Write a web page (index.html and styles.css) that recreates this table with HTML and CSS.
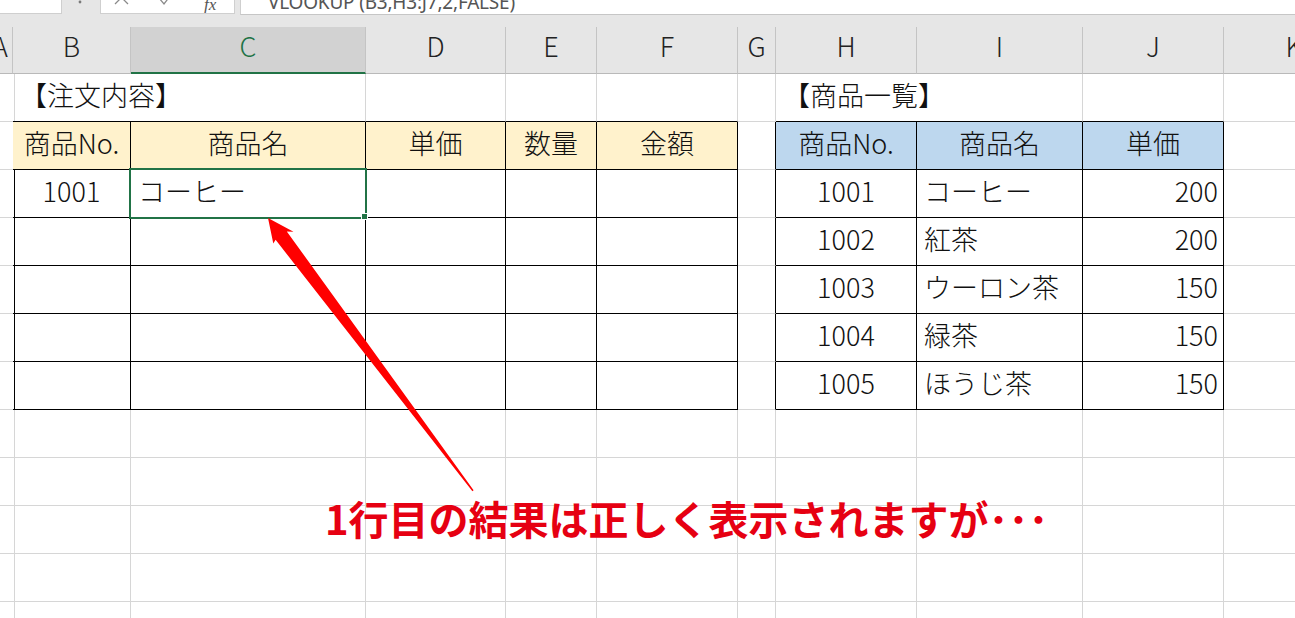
FILE: index.html
```html
<!DOCTYPE html>
<html lang="ja">
<head>
<meta charset="utf-8">
<title>VLOOKUP</title>
<link rel="stylesheet" href="styles.css">
</head>
<body>
<div class="topbar">
  <div class="namebox"></div>
  <div class="dots"><svg width="38" height="14"><circle cx="18" cy="2" r="1.4" fill="#7a7a7a"/></svg></div>
  <div class="fbtns">
    <svg width="135" height="14">
      <path d="M14 -9 L27 4 M27 -9 L14 4" stroke="#8a8a8a" stroke-width="1.3" fill="none"/>
      <path d="M58 -2 L63 4 L72 -8" stroke="#8a8a8a" stroke-width="1.3" fill="none"/>
      <text x="103" y="10" class="fxt">fx</text>
    </svg>
  </div>
  <div class="gap"></div>
  <div class="finput"><div class="ftext">VLOOKUP (B3,H3:J7,2,FALSE)</div></div>
</div>

<div class="sheet">
  <div class="hd a">A</div><div class="hd">B</div><div class="hd sel">C</div><div class="hd">D</div><div class="hd">E</div><div class="hd">F</div><div class="hd">G</div><div class="hd">H</div><div class="hd">I</div><div class="hd">J</div><div class="hd">K</div>

  <div class="c"></div><div class="c s2 bb title">【注文内容】</div><div class="c bb"></div><div class="c bb"></div><div class="c bb"></div><div class="c"></div><div class="c s2 bb title">【商品一覧】</div><div class="c bb"></div><div class="c"></div>

  <div class="c br"></div><div class="c t o ctr">商品No.</div><div class="c t o ctr">商品名</div><div class="c t o ctr">単価</div><div class="c t o ctr">数量</div><div class="c t o ctr">金額</div><div class="c br"></div><div class="c t b ctr">商品No.</div><div class="c t b ctr">商品名</div><div class="c t b ctr">単価</div><div class="c"></div>

  <div class="c br"></div><div class="c t ctr">1001</div><div class="c t sel">コーヒー</div><div class="c t"></div><div class="c t"></div><div class="c t"></div><div class="c br"></div><div class="c t ctr">1001</div><div class="c t">コーヒー</div><div class="c t rgt">200</div><div class="c"></div>

  <div class="c br"></div><div class="c t"></div><div class="c t"></div><div class="c t"></div><div class="c t"></div><div class="c t"></div><div class="c br"></div><div class="c t ctr">1002</div><div class="c t">紅茶</div><div class="c t rgt">200</div><div class="c"></div>

  <div class="c br"></div><div class="c t"></div><div class="c t"></div><div class="c t"></div><div class="c t"></div><div class="c t"></div><div class="c br"></div><div class="c t ctr">1003</div><div class="c t">ウーロン茶</div><div class="c t rgt">150</div><div class="c"></div>

  <div class="c br"></div><div class="c t"></div><div class="c t"></div><div class="c t"></div><div class="c t"></div><div class="c t"></div><div class="c br"></div><div class="c t ctr">1004</div><div class="c t">緑茶</div><div class="c t rgt">150</div><div class="c"></div>

  <div class="c br"></div><div class="c t"></div><div class="c t"></div><div class="c t"></div><div class="c t"></div><div class="c t"></div><div class="c br"></div><div class="c t ctr">1005</div><div class="c t">ほうじ茶</div><div class="c t rgt">150</div><div class="c"></div>

  <div class="c"></div><div class="c"></div><div class="c"></div><div class="c"></div><div class="c"></div><div class="c"></div><div class="c"></div><div class="c"></div><div class="c"></div><div class="c"></div><div class="c"></div>
  <div class="c"></div><div class="c"></div><div class="c"></div><div class="c"></div><div class="c"></div><div class="c"></div><div class="c"></div><div class="c"></div><div class="c"></div><div class="c"></div><div class="c"></div>
  <div class="c"></div><div class="c"></div><div class="c"></div><div class="c"></div><div class="c"></div><div class="c"></div><div class="c"></div><div class="c"></div><div class="c"></div><div class="c"></div><div class="c"></div>
  <div class="c"></div><div class="c"></div><div class="c"></div><div class="c"></div><div class="c"></div><div class="c"></div><div class="c"></div><div class="c"></div><div class="c"></div><div class="c"></div><div class="c"></div>
  <div class="c"></div><div class="c"></div><div class="c"></div><div class="c"></div><div class="c"></div><div class="c"></div><div class="c"></div><div class="c"></div><div class="c"></div><div class="c"></div><div class="c"></div>
</div>

<svg class="arrow" width="1295" height="618" viewBox="0 0 1295 618">
  <polygon points="268,218 293.5,231.7 286.8,231.4 473.6,490.3 472.4,491.3 275.6,239.8 273.3,243.5" fill="#ff0000"/>
</svg>
<div class="note">1行目の結果は正しく表示されますが･･･</div>
</body>
</html>
```

FILE: styles.css
```css
html, body {
  margin: 0;
  padding: 0;
}

body {
  width: 1295px;
  height: 618px;
  overflow: hidden;
  position: relative;
  background: #ffffff;
  font-family: "Noto Sans CJK JP", "Noto Sans", sans-serif;
  color: #111111;
}

/* formula bar strip */
.topbar {
  display: flex;
  align-items: flex-start;
  height: 27px;
  background: #e6e6e6;
}

.namebox {
  width: 62px;
  height: 14px;
  box-sizing: border-box;
  background: #ffffff;
  border-right: 1px solid #cfcfcf;
  border-bottom: 1px solid #cfcfcf;
}

.dots {
  width: 38px;
  height: 14px;
}

.dots svg,
.fbtns svg {
  display: block;
}

.fbtns {
  width: 135px;
  height: 14px;
  box-sizing: border-box;
  background: #ffffff;
  border-left: 1px solid #cfcfcf;
  border-right: 1px solid #cfcfcf;
  border-bottom: 1px solid #cfcfcf;
  overflow: hidden;
}

.fxt {
  font-family: "Liberation Serif", serif;
  font-style: italic;
  font-size: 17px;
  fill: #555555;
}

.gap {
  width: 5px;
}

.finput {
  flex: 1;
  height: 15px;
  box-sizing: border-box;
  background: #ffffff;
  border-left: 1px solid #cfcfcf;
  border-bottom: 1px solid #c6c6c6;
  overflow: hidden;
}

.ftext {
  margin-top: -7px;
  padding-left: 27px;
  font-family: "Noto Sans", sans-serif;
  font-size: 19px;
  line-height: 19px;
  color: #555555;
  white-space: nowrap;
  letter-spacing: -0.2px;
}

/* sheet grid */
.sheet {
  display: grid;
  grid-template-columns: 13px 118px 235px 140px 91px 141px 38px 141px 166px 141px 141px;
  grid-template-rows: 47px;
  grid-auto-rows: 48px;
  width: max-content;
}

.hd {
  box-sizing: border-box;
  background: #e6e6e6;
  border-right: 1px solid #c4c4c4;
  border-bottom: 1px solid #b9b9b9;
  text-align: center;
  font-size: 27px;
  font-weight: 300;
  line-height: 38px;
  color: #222222;
  overflow: hidden;
  white-space: nowrap;
}

.hd.a {
  display: flex;
  justify-content: flex-end;
  padding-right: 4px;
}

.hd.sel {
  background: #d2d2d2;
  color: #217346;
  border-bottom: 2px solid #217346;
}

.c {
  box-sizing: border-box;
  border-right: 1px solid #d6d6d6;
  border-bottom: 1px solid #d6d6d6;
  font-size: 27px;
  font-weight: 300;
  line-height: 42px;
  white-space: nowrap;
  padding: 0 7px;
}

.t {
  border-right-color: #000000;
  border-bottom-color: #000000;
}

.br {
  border-right-color: #000000;
}

.bb {
  border-bottom-color: #000000;
}

.s2 {
  grid-column: span 2;
}

.o {
  background: #fff2cc;
}

.b {
  background: #bdd7ee;
}

.ctr {
  text-align: center;
  padding: 0;
}

.rgt {
  text-align: right;
  padding-right: 5px;
}

.title {
  padding-left: 7px;
}

/* selected cell */
.c.sel {
  position: relative;
}

.c.sel::before {
  content: "";
  position: absolute;
  left: -2px;
  top: -2px;
  right: -2px;
  bottom: -2px;
  border: 2px solid #217346;
}

.c.sel::after {
  content: "";
  position: absolute;
  right: -3px;
  bottom: -3px;
  width: 7px;
  height: 7px;
  box-sizing: border-box;
  background: #217346;
  border: 1px solid #ffffff;
}

/* annotation overlays */
.arrow {
  position: absolute;
  left: 0;
  top: 0;
  pointer-events: none;
}

.note {
  position: absolute;
  left: 325px;
  top: 498px;
  font-family: "Noto Sans CJK JP", sans-serif;
  font-weight: 700;
  font-size: 40px;
  line-height: 40px;
  color: #e60012;
  white-space: nowrap;
}
```
